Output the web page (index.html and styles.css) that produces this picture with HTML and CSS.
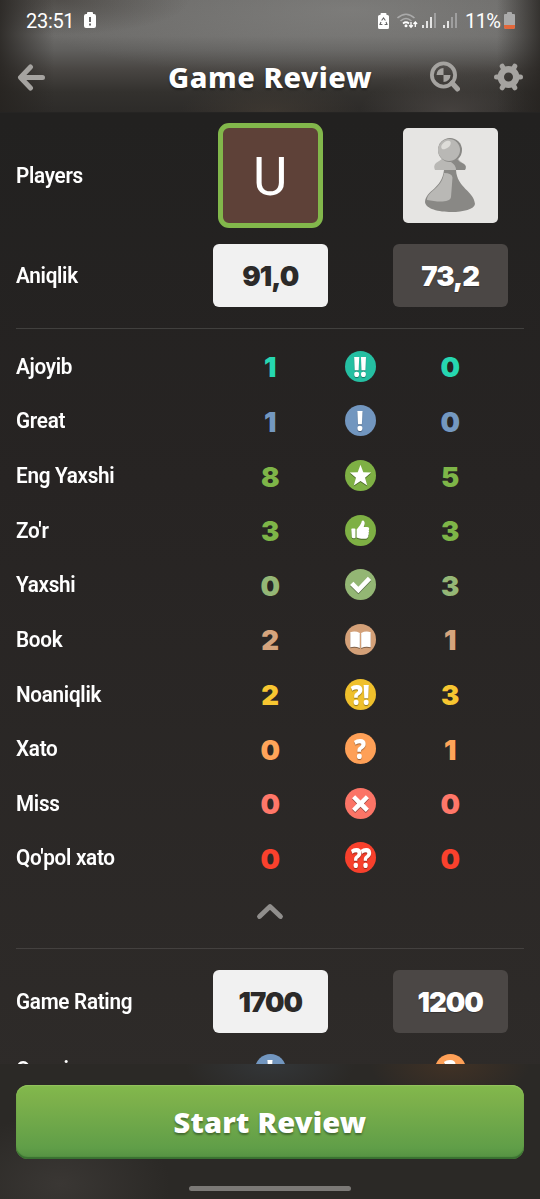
FILE: index.html
```
<!DOCTYPE html>
<html lang="uz">
<head>
<meta charset="utf-8">
<title>Game Review</title>
<link rel="stylesheet" href="styles.css">
</head>
<body>
<div class="screen">
<header class="header">
  <div class="status">
    <span class="clock">23:51</span>
    <svg class="battery-alert" width="12" height="17" viewBox="0 0 12 17"><path d="M3 1q0-1 1-1h4q1 0 1 1v1h1q2 0 2 2v10q0 2-2 2H2q-2 0-2-2V4q0-2 2-2h1z" fill="#fff"/><path d="M6 5v5M6 11.5v2" stroke="#666" stroke-width="2"/></svg>
    <div class="signals">
      <svg width="11" height="16" viewBox="0 0 11 16"><path d="M2.500 1q0-1 1-1h4q1 0 1 1v1h1q1.500 0 1.500 1.500v11q0 1.500-1.500 1.500h-8Q0 16 0 14.500v-11Q0 2 1.500 2h1z" fill="#fff"/><path d="M3.600 7.500 5.500 5l1.900 2.500M8 9l1 2.500H6.600M4.400 11.500H2L3 9" fill="none" stroke="#666" stroke-width="1.100"/></svg>
      <svg width="21" height="16" viewBox="0 0 21 16" fill="none"><path d="M.5 5Q9-2.500 17.500 5M3.500 8Q9 3 14.500 8" stroke="#aaa" stroke-width="1.600"/><path d="M6 10.500q3-2.500 6 0" stroke="#fff" stroke-width="1.800"/><circle cx="9" cy="12.800" r="1.500" fill="#fff"/><path d="M14 9v5m-1.800-1.800L14 14.200l1.800-2M18.300 14V9m-1.800 2 1.800-2 1.800 2" stroke="#fff" stroke-width="1.300"/></svg>
      <svg width="14" height="15" viewBox="0 0 14 15"><path d="M1 12v3M5 8v7M9 4v11" stroke="#fff" stroke-width="1.600"/><path d="M13 0v15" stroke="#aaa" stroke-width="1.600"/></svg>
      <svg class="sim2" width="14" height="15" viewBox="0 0 14 15"><path d="M1 12v3M5 8v7" stroke="#fff" stroke-width="1.600"/><path d="M9 4v11M13 0v15" stroke="#aaa" stroke-width="1.600"/></svg>
      <span class="percent">11%</span>
      <svg class="battery" width="11" height="17" viewBox="0 0 11 17"><path d="M3 1q0-1 1-1h3q1 0 1 1v1h2q1 0 1 1v12q0 2-2 2H2q-2 0-2-2V3q0-1 1-1h2z" fill="#aaa"/><path d="M0 13h11v2q0 2-2 2H2q-2 0-2-2z" fill="#e3683b"/></svg>
    </div>
  </div>
  <div class="bar">
    <svg class="back" width="28" height="27" viewBox="0 0 28 27"><path d="M13.500 3 3.500 13.500l10 10.500M4 13.500h21.500" fill="none" stroke="#a5a3a0" stroke-width="5" stroke-linejoin="round" stroke-linecap="round"/></svg>
    <h1 class="title">Game Review</h1>
    <svg class="search" width="30" height="31" viewBox="0 0 30 31"><g fill="none" stroke="#a5a3a0"><circle cx="13.500" cy="14" r="11.600" stroke-width="3.800"/><path d="m22 22 5.500 6" stroke-width="5" stroke-linecap="round"/></g><path d="M13.500 7v7h-7A7 7 0 0 1 13.500 7M13.500 14h7a7 7 0 0 1-7 7z" fill="#a5a3a0"/></svg>
    <svg class="gear" width="29" height="28" viewBox="0 0 29 28"><g fill="none" stroke="#a5a3a0"><circle cx="14.500" cy="14" r="7.700" stroke-width="6.400"/><path d="M4 14H2.500M25 14h1.500M9.200 5l-1-1.800M19.800 23l1 1.800M19.800 5l1-1.800M9.200 23l-1 1.800" stroke-width="5" stroke-linecap="round"/></g></svg>
  </div>
</header>

<main class="content">
  <section class="grid players">
    <span class="label">Players</span>
    <div class="avatar user">U</div>
    <div class="avatar guest"><svg width="52" height="77" viewBox="0 0 52 77"><path d="M1 64C2 52 18 51 20 32h12c1 18 18 21 19 34-1 11-49 11-50-2z" fill="#898885"/><path d="M20 35q8 0 8.500 4.500L27 59c-1 6-14 5-24 3 0-9 15-11 17-27z" fill="#b9b8b5"/><path d="M19 20q-2 2-7 5-3 3-1 7h30q2-4-1-6-5-3-7-7z" fill="#b9b8b5"/><path d="M27 24l6-3q2 3 7 5 3 2 1 6h-9q0-5-5-8z" fill="#898885"/><circle cx="26" cy="12" r="12" fill="#898885"/><circle cx="25" cy="12" r="11" fill="#b9b8b5"/><ellipse cx="22" cy="7" rx="5.500" ry="3.300" transform="rotate(-38 22 7)" fill="#dddcd8"/></svg></div>
  </section>
  <section class="grid scores accuracy">
    <span class="label">Aniqlik</span><b class="score light">91,0</b><b class="score dark">73,2</b>
  </section>
  <section class="moves">
    <div class="grid move brilliant"><span class="label">Ajoyib</span><b class="n">1</b><i class="badge"><span class="mark">!!</span></i><b class="n">0</b></div>
    <div class="grid move great"><span class="label">Great</span><b class="n">1</b><i class="badge"><span class="mark">!</span></i><b class="n">0</b></div>
    <div class="grid move best"><span class="label">Eng Yaxshi</span><b class="n">8</b><i class="badge"><svg viewBox="0 0 32 32"><path d="m16 5 2.900 7.600 8.100.4-6.300 5.200 2.200 8L16 21.800 9.100 26.200l2.200-8L5 13l8.100-.4z"/></svg></i><b class="n">5</b></div>
    <div class="grid move excellent"><span class="label">Zo'r</span><b class="n">3</b><i class="badge"><svg viewBox="0 0 32 32"><path d="M7.300 14h2.500q1 0 1 1v8q0 1-1 1H8.300q-1.200-.2-1.300-1.500L6.500 15q0-1 .8-1zM12 15l3.500-4.500q1.300-1.700 1.800-4Q18 5 19.400 6c1.600 1.800 1 4-.1 6.500H23q2 .2 2 1.700 0 1-.5 1.500.8 1.200-.1 2.700.7 1.300-.3 2.600.3 1.500-.8 2.400-.5 1-2 1h-4.500q-3 0-4.800-1.200z"/></svg></i><b class="n">3</b></div>
    <div class="grid move good"><span class="label">Yaxshi</span><b class="n">0</b><i class="badge"><svg viewBox="0 0 32 32"><path d="m5.200 16.500 3.500-3.300 5.100 5L23.600 8l3.400 3.400L13.800 25z"/></svg></i><b class="n">3</b></div>
    <div class="grid move book"><span class="label">Book</span><b class="n">2</b><i class="badge"><svg viewBox="0 0 32 32"><path d="M5.500 8.500q5-1.700 9.800.8v15.500q-4.800-2.300-9.800-.8zM16.700 9.300q4.800-2.500 9.800-.8V24q-5-1.500-9.800.8z"/></svg></i><b class="n">1</b></div>
    <div class="grid move inaccuracy"><span class="label">Noaniqlik</span><b class="n">2</b><i class="badge"><span class="mark">?!</span></i><b class="n">3</b></div>
    <div class="grid move mistake"><span class="label">Xato</span><b class="n">0</b><i class="badge"><span class="mark">?</span></i><b class="n">1</b></div>
    <div class="grid move miss"><span class="label">Miss</span><b class="n">0</b><i class="badge"><svg viewBox="0 0 32 32"><path d="m10.500 7.500 5.500 5.300 5.500-5.300 3.200 3.200-5.200 5.400 5.200 5.400-3.200 3.200-5.500-5.300-5.500 5.300-3.200-3.200 5.200-5.400-5.200-5.400z"/></svg></i><b class="n">0</b></div>
    <div class="grid move blunder"><span class="label">Qo'pol xato</span><b class="n">0</b><i class="badge"><span class="mark pair">??</span></i><b class="n">0</b></div>
  </section>
  <div class="collapse"><svg width="28" height="18" viewBox="0 0 28 18"><path d="m3.500 13.500 10.500-10 10.500 10" fill="none" stroke="#908e8c" stroke-width="4.800" stroke-linecap="round" stroke-linejoin="round"/></svg></div>
  <section class="grid scores rating">
    <span class="label">Game Rating</span><b class="score light">1700</b><b class="score dark">1200</b>
  </section>
  <section class="grid phase">
    <span class="label">Opening</span><i class="badge great-bg"><span class="mark">!</span></i><i class="badge second mistake-bg"><span class="mark">?</span></i>
  </section>
</main>

<footer class="footer">
  <button class="start"><span>Start Review</span></button>
  <div class="home"></div>
</footer>
</div>
</body>
</html>
```
FILE: styles.css
```
* { box-sizing: border-box; }
body { margin: 0; background: #2a2725; color: #fff; font-family: Roboto, sans-serif; }
.screen { width: 540px; height: 1199px; overflow: hidden; display: flex; flex-direction: column; background: linear-gradient(#222120 10%, #272423 40%, #2e2b29 90%); }
.header {
  height: 113px; flex: none; display: flex; flex-direction: column; border-bottom: 1px solid #252423;
  background:
    linear-gradient(90deg, rgba(38,35,32,.85), rgba(38,35,32,0) 10%, rgba(38,35,32,0) 92%, rgba(38,35,32,.8)),
    radial-gradient(ellipse 130px 35px at 60px 0, rgba(50,45,40,.45), rgba(50,45,40,0)),
    radial-gradient(ellipse 330px 70px at 350px 10px, rgba(160,160,158,.35), rgba(150,150,148,0)),
    radial-gradient(ellipse 90px 30px at 270px 112px, rgba(75,66,56,.5), rgba(75,66,56,0)),
    radial-gradient(ellipse 90px 40px at 450px 112px, rgba(85,80,77,.6), rgba(85,80,77,0)),
    linear-gradient(#686765 0, #6c6b69 36px, #605f5d 50px, #484542 70px, #33312e 92px, #2d2b29 112px);
}
.status { height: 41px; padding: 0 26px; display: flex; align-items: center; font-size: 20px; }
.clock { width: 48px; letter-spacing: -.3px; }
.battery-alert { margin-left: 10px; }
.signals { margin-left: auto; display: flex; align-items: center; }
.signals svg:nth-child(2) { margin-left: 8px; }
.signals svg:nth-child(3) { margin-left: 4px; }
.sim2 { margin-left: 7px; }
.percent { margin-left: 8px; width: 36px; letter-spacing: -.6px; }
.battery { margin-left: 3px; margin-right: -1px; }
.bar { height: 71px; padding: 0 17px; display: grid; grid-template-columns: 28px 1fr 30px 29px; column-gap: 34px; align-items: center; }
.title { margin: 0 -16px 0 49px; text-align: center; white-space: nowrap; font: 800 29px/40px "Noto Sans", sans-serif; letter-spacing: .6px; text-shadow: 0 2px 2px rgba(0,0,0,.35); }
.back { margin-top: 1px; }
.content { height: 951px; flex: none; overflow: hidden; }
.grid { display: grid; grid-template-columns: 196.500px 115.500px 64.500px 115.500px; align-items: center; padding-left: 16px; }
.label { font-size: 22px; font-weight: 600; letter-spacing: -.3px; transform: scaleX(.94); transform-origin: left; white-space: nowrap; }
.players { height: 125px; }
.avatar { justify-self: center; display: flex; align-items: center; justify-content: center; }
.user { width: 105px; height: 105px; border: 5px solid #82b74b; border-radius: 11px; background: #5e4138; font-size: 53px; line-height: 1; padding-top: 3px; }
.guest { grid-column: 4; width: 95px; height: 95px; border-radius: 5px; background: #e6e5e3; }
.guest svg { margin-top: 2px; }
.accuracy { height: 75px; }
.score { height: 63px; padding-top: 1px; border-radius: 6px; display: flex; align-items: center; justify-content: center; font: 900 27.500px Inter, sans-serif; letter-spacing: -1px; }
.light { background: #f1f1f1; color: #2c2a29; }
.dark { grid-column: 4; background: #4b4745; text-shadow: 0 1px 1px rgba(0,0,0,.3); }
.moves { margin: 15px 16px 0; border-top: 1px solid #41403e; padding-top: 10px; }
.moves .grid { padding: 0; }
.move { height: 54.640px; }
.n { text-align: center; padding-top: 2px; font: 900 27.500px/40px Inter, sans-serif; }
.badge { justify-self: center; width: 31px; height: 31px; border-radius: 50%; display: flex; align-items: center; justify-content: center; color: #fff; font: normal 900 28px/31px "Noto Sans", sans-serif; text-shadow: 0 1px 1px rgba(0,0,0,.4); }
.badge svg { width: 31px; height: 31px; fill: #fff; filter: drop-shadow(0 1px .5px rgba(0,0,0,.4)); }
.mark { display: block; transform: scaleX(.85); }
.pair { letter-spacing: -1.500px; margin-right: -1.500px; transform: scaleX(.76); }
.brilliant .n { color: #26d7b1; } .brilliant .badge { background: #25bfa2; }
.great .n { color: #7498c0; } .great .badge, .great-bg { background: #7296bf; }
.best .n, .excellent .n { color: #7eb548; } .best .badge, .excellent .badge { background: #7eb044; }
.good .n { color: #95b776; } .good .badge { background: #93b674; }
.book .n { color: #d5a47d; } .book .badge { background: #d3a078; }
.inaccuracy .n { color: #f7c631; } .inaccuracy .badge { background: #efc02c; }
.mistake .n { color: #ffa459; } .mistake .badge, .mistake-bg { background: #fea057; }
.miss .n { color: #ff7769; } .miss .badge { background: #fb7466; }
.blunder .n { color: #fa412d; } .blunder .badge { background: #f7402c; }
.collapse { height: 63px; display: grid; place-items: center; padding-bottom: 9px; }
.rating { margin: 0 16px; padding: 0; height: 106px; border-top: 1px solid #44413f; }
.phase { height: 60px; margin-top: -15px; }
.second { grid-column: 4; }
.footer { height: 135px; flex: none; padding: 21px 16px 0; display: flex; flex-direction: column; align-items: center;
  background: radial-gradient(ellipse 85px 40px at 270px 0, rgba(70,85,100,.3), transparent), radial-gradient(ellipse 80px 40px at 450px 0, rgba(115,70,35,.3), transparent), radial-gradient(ellipse 110px 70px at 60px 120px, #3a3734, transparent), #2b2926; }
.start { width: 508px; height: 74px; flex: none; border: 0; padding: 0; border-radius: 12px; color: #fff; background: linear-gradient(#82b94c, #7db14b 20%, #609e48 85%, #549042); box-shadow: inset 0 1px 1px #94c45f, inset 0 -2px 1px #397031; font: 900 29px/74px "Noto Sans", sans-serif; letter-spacing: .2px; text-shadow: 0 2px 2px rgba(0,0,0,.35); }
.home { width: 162px; height: 5px; margin-top: 27px; border-radius: 3px; background: #7b7976; }
```
